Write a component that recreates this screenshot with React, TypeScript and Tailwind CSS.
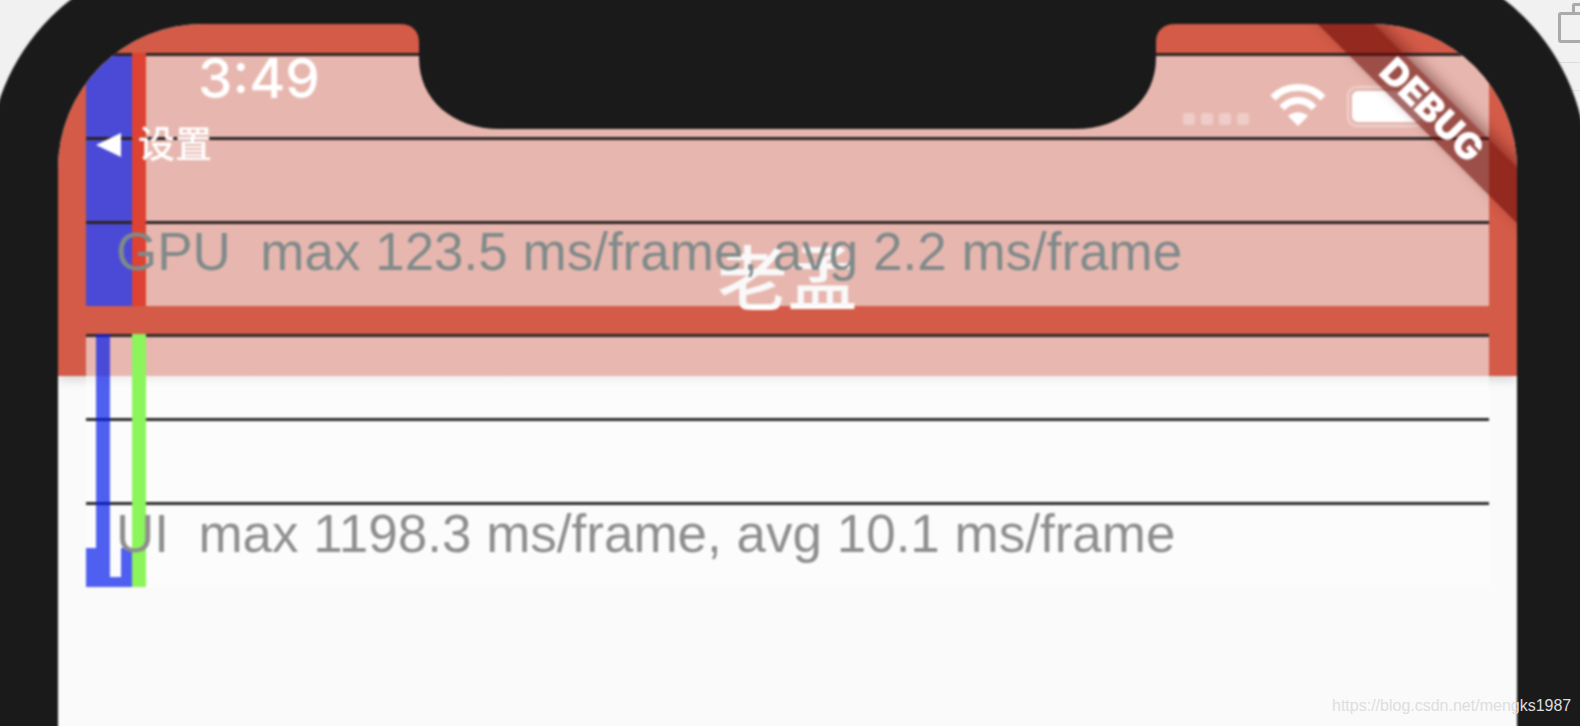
const GRAPH_LINES = [0, 84, 168];

function WifiIcon() {
  return (
    <svg width="56" height="44" viewBox="0 0 56 44" fill="none">
      <path d="M3 15C16 1 40 1 53 15" stroke="white" strokeWidth="7" />
      <path d="M12 25C21 15 35 15 44 25" stroke="white" strokeWidth="7" />
      <path d="M28 43L18 33C24 28 32 28 38 33Z" fill="white" />
    </svg>
  );
}

function Notch() {
  return (
    <svg width="775" height="105" viewBox="0 0 775 105" className="absolute left-[342px] top-0">
      <path
        d="M0 0C12 0 19 7 19 18V34C19 75 52 105 100 105H675C723 105 756 75 756 34V18C756 7 763 0 775 0Z"
        fill="#1a1a1a"
      />
    </svg>
  );
}

function GpuGraph() {
  return (
    <svg width="1403" height="253" viewBox="0 0 1403 253" className="absolute inset-0">
      <rect x="0" y="0" width="46" height="253" fill="#4a4ad6" />
      {GRAPH_LINES.map((y) => (
        <rect key={y} x="0" y={y} width="1403" height="3" fill="#2a2222" />
      ))}
      <rect x="46" y="0" width="14" height="253" fill="#dd4232" />
    </svg>
  );
}

function UiGraph() {
  return (
    <svg width="1403" height="253" viewBox="0 0 1403 253" className="absolute inset-0">
      {GRAPH_LINES.map((y) => (
        <rect key={y} x="0" y={y} width="1403" height="3" fill="#2a2a2a" />
      ))}
      <path d="M10 0H24V243H35V214H46V253H0V214H10Z" fill="#051dea" fillOpacity="0.7" />
      <rect x="46" y="0" width="14" height="253" fill="#8cf55c" />
    </svg>
  );
}

export default function App() {
  return (
    <div className="relative h-[726px] w-[1580px] overflow-hidden bg-[#f1f1f1] font-['Liberation_Sans',sans-serif]">
      {/* desktop behind the phone */}
      <div className="absolute left-[1558px] top-[12px] h-[31px] w-[40px] rounded-[3px] border-[3px] border-[#aaaaaa]" />
      <div className="absolute left-[1572px] top-[3px] h-[9px] w-[20px] rounded-tl-[3px] border-l-[3px] border-t-[3px] border-[#aaaaaa]" />
      <div className="absolute left-[1540px] top-[62px] h-px w-[40px] bg-[#dddddd]" />
      <div className="absolute left-[1550px] top-[90px] h-px w-[30px] bg-[#dddddd]" />

      <div className="relative ml-[-12px] mt-[-46px] h-[820px] w-[1599px] rounded-t-[215px] bg-[#1a1a1a] pl-[70px] pr-[70px] pt-[70px] blur-[0.9px]">
        <div className="relative h-[750px] overflow-hidden rounded-t-[145px] bg-[#fafafa]">
          {/* app bar */}
          <div className="flex h-[352px] justify-center bg-[#d35b48] pt-[219px] shadow-[0_4px_10px_rgba(0,0,0,0.14)]">
            <span className="font-['Noto_Sans_CJK_SC',sans-serif] text-[70px] font-medium leading-[64px] text-white">
              老孟
            </span>
          </div>

          {/* performance overlay */}
          <div className="absolute left-[28px] top-[29px] flex w-[1403px] flex-col gap-[28px]">
            <div className="relative h-[253px] whitespace-pre bg-[#f5f5f5]/60 pl-[30px] pt-[171px] text-[53px] leading-[56px] text-[#808a8a]">
              <GpuGraph />
              <span className="relative">GPU  max 123.5 ms/frame, avg 2.2 ms/frame</span>
            </div>
            <div className="relative h-[253px] whitespace-pre bg-[linear-gradient(to_bottom,rgba(245,245,245,0.6)_42px,rgba(255,255,255,0.55)_42px)] pl-[30px] pt-[172px] text-[53px] leading-[56px] text-[#8e8e8e]">
              <UiGraph />
              <span className="relative">UI  max 1198.3 ms/frame, avg 10.1 ms/frame</span>
            </div>
          </div>

          {/* status bar */}
          <div className="absolute left-[140px] right-[92px] top-[22px] flex items-start justify-between">
            <span className="font-['Inter',sans-serif] text-[55px] font-medium leading-[64px] text-white">3:49</span>
            <div className="mt-[37px] flex items-end gap-[21px]">
              <div className="mb-[2px] flex gap-[6px]">
                <span className="h-[12px] w-[12px] rounded-[3px] bg-white/30" />
                <span className="h-[12px] w-[12px] rounded-[3px] bg-white/30" />
                <span className="h-[12px] w-[12px] rounded-[3px] bg-white/30" />
                <span className="h-[12px] w-[12px] rounded-[3px] bg-white/30" />
              </div>
              <WifiIcon />
              <div className="h-[41px] w-[78px] rounded-[10px] border-2 border-white/40 p-[3px]">
                <div className="h-full w-[70px] rounded-[6px] bg-white" />
              </div>
            </div>
          </div>
          <div className="absolute left-[38px] top-[95px] flex items-center gap-[16px]">
            <svg width="26" height="24" viewBox="0 0 26 24" className="mt-[6px]">
              <path d="M0 12L25 0V24Z" fill="white" />
            </svg>
            <span className="font-['Noto_Sans_CJK_SC',sans-serif] text-[37px] font-medium leading-[46px] text-white">
              设置
            </span>
          </div>

          {/* debug ribbon */}
          <div className="absolute left-[1174px] top-[66px] flex h-[40px] w-[400px] rotate-45 items-center justify-center bg-[#6a0a05]/60 font-['Inter',sans-serif] text-[37px] font-black text-white shadow-[0_-5px_14px_rgba(60,0,0,0.4)]">
            DEBUG
          </div>

          <Notch />
        </div>
      </div>
      <div className="absolute left-[1332px] top-[695px] text-[16px] leading-[22px] text-[#dedede]">
        https://blog.csdn.net/mengks1987
      </div>
    </div>
  );
}
